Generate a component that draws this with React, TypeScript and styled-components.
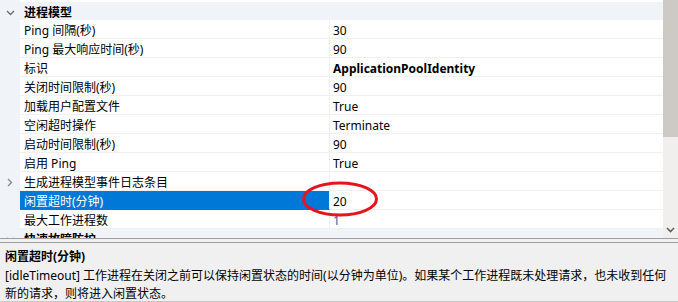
import * as React from 'react';
import styled, { createGlobalStyle } from 'styled-components';

const GlobalStyle = createGlobalStyle`
    html, body {
        margin: 0;
        padding: 0;
        background: #f0f0f0;
    }
    body {
        font-family: 'Noto Sans', 'Noto Sans CJK SC', sans-serif;
        font-size: 12px;
    }
`;

const Window = styled.div`
    width: 678px;
    height: 302px;
    background: #f0f0f0;
    display: flex;
    flex-direction: column;
    overflow: hidden;
    position: relative;
`;

const GridArea = styled.div`
    height: 238px;
    display: flex;
    border-bottom: 1px solid #a0a0a0;
    background: #ffffff;
`;

const List = styled.div`
    flex: 1;
    overflow: hidden;
    display: flex;
    flex-direction: column;
    background: #f0f3f8;
`;

const TopStrip = styled.div`
    height: 2px;
    flex: none;
    margin-left: 20px;
    background: #ffffff;
`;

const CategoryRow = styled.div`
    height: 18px;
    flex: none;
    display: grid;
    grid-template-columns: 20px 1fr;
    background: #f0f3f8;
    font-weight: bold;
    color: #000;
    line-height: 18px;
`;

const Row = styled.div`
    height: 19px;
    flex: none;
    display: grid;
    grid-template-columns: 20px 310px 1fr;
    line-height: 18px;
`;

const Gutter = styled.div`
    display: flex;
    align-items: center;
    justify-content: center;
    padding-top: 1px;
    background: #f0f3f8;
`;

const Cell = styled.div`
    box-sizing: border-box;
    height: 19px;
    padding-top: 2px;
    white-space: nowrap;
    overflow: hidden;
    border-bottom: 1px solid #f0f0f0;
`;

const Label = styled(Cell)<{ $selected?: boolean }>`
    padding-left: 4px;
    background: ${p => (p.$selected ? '#0078d7' : '#ffffff')};
    color: ${p => (p.$selected ? '#ffffff' : '#000000')};
    border-bottom-color: ${p => (p.$selected ? '#0078d7' : '#f0f0f0')};
    border-right: 1px solid #f0f0f0;
`;

const Value = styled(Cell)<{ $bold?: boolean; $tint?: string }>`
    padding-left: 3px;
    background: #ffffff;
    color: ${p => p.$tint || '#000000'};
    font-weight: ${p => (p.$bold ? 'bold' : 'normal')};
`;

const CategoryTitle = styled.div`
    padding: 2px 0 0 4px;
    white-space: nowrap;
`;

const Scrollbar = styled.div`
    width: 15px;
    flex: none;
    background: #f0efed;
    display: flex;
    flex-direction: column;
`;

const Thumb = styled.div`
    height: 137px;
    background: #cdcac5;
`;

const Track = styled.div`
    flex: 1;
`;

const ArrowButton = styled.div`
    height: 17px;
    display: flex;
    align-items: center;
    justify-content: center;
`;

const Splitter = styled.div`
    height: 3px;
    flex: none;
`;

const Description = styled.div`
    border-top: 1px solid #a0a0a0;
    border-bottom: 1px solid #c8c8c8;
    height: 53px;
    padding: 5px 5px 0;
    color: #000;
    line-height: 18px;
    white-space: nowrap;
`;

const DescTitle = styled.div`
    font-weight: bold;
    margin-bottom: 1px;
`;

const Highlight = styled.svg`
    position: absolute;
    left: 300px;
    top: 179px;
    pointer-events: none;
`;

const ChevronDown = () => (
    <svg width="9" height="6" viewBox="0 0 9 6">
        <polyline points="1,1 4.5,4.5 8,1" fill="none" stroke="#6e6e6e" strokeWidth="1.4" />
    </svg>
);

const ChevronRight = () => (
    <svg width="6" height="9" viewBox="0 0 6 9">
        <polyline points="1,1 4.5,4.5 1,8" fill="none" stroke="#8a8a8a" strokeWidth="1.4" />
    </svg>
);

type Prop = { label: string; value?: string; bold?: boolean; tint?: string; selected?: boolean; expandable?: boolean };

const props: Prop[] = [
    { label: 'Ping 间隔(秒)', value: '30' },
    { label: 'Ping 最大响应时间(秒)', value: '90' },
    { label: '标识', value: 'ApplicationPoolIdentity', bold: true },
    { label: '关闭时间限制(秒)', value: '90' },
    { label: '加载用户配置文件', value: 'True' },
    { label: '空闲超时操作', value: 'Terminate' },
    { label: '启动时间限制(秒)', value: '90' },
    { label: '启用 Ping', value: 'True' },
    { label: '生成进程模型事件日志条目', value: '', expandable: true },
    { label: '闲置超时(分钟)', value: '20', selected: true },
    { label: '最大工作进程数', value: '1', tint: '#1c5fb0' },
];

export default function App() {
    return (
        <Window>
            <GlobalStyle />
            <GridArea>
                <List>
                    <TopStrip />
                    <CategoryRow>
                        <Gutter><ChevronDown /></Gutter>
                        <CategoryTitle>进程模型</CategoryTitle>
                    </CategoryRow>
                    {props.map(p => (
                        <Row key={p.label}>
                            <Gutter>{p.expandable && <ChevronRight />}</Gutter>
                            <Label $selected={p.selected}>{p.label}</Label>
                            <Value $bold={p.bold} $tint={p.tint}>{p.value}</Value>
                        </Row>
                    ))}
                    <CategoryRow>
                        <Gutter><ChevronDown /></Gutter>
                        <CategoryTitle>快速故障防护</CategoryTitle>
                    </CategoryRow>
                </List>
                <Scrollbar>
                    <Thumb />
                    <Track />
                    <ArrowButton>
                        <svg width="9" height="6" viewBox="0 0 9 6">
                            <polyline points="1,1 4.5,4.5 8,1" fill="none" stroke="#606060" strokeWidth="1.6" />
                        </svg>
                    </ArrowButton>
                </Scrollbar>
            </GridArea>
            <Splitter />
            <Description>
                <DescTitle>闲置超时(分钟)</DescTitle>
                [idleTimeout] 工作进程在关闭之前可以保持闲置状态的时间(以分钟为单位)。如果某个工作进程既未处理请求，也未收到任何
                <br />
                新的请求，则将进入闲置状态。
            </Description>
            <Highlight width="80" height="40" viewBox="0 0 80 40">
                <ellipse cx="40" cy="20" rx="36.5" ry="16" fill="none" stroke="#e8141b" strokeWidth="3" />
            </Highlight>
        </Window>
    );
}
